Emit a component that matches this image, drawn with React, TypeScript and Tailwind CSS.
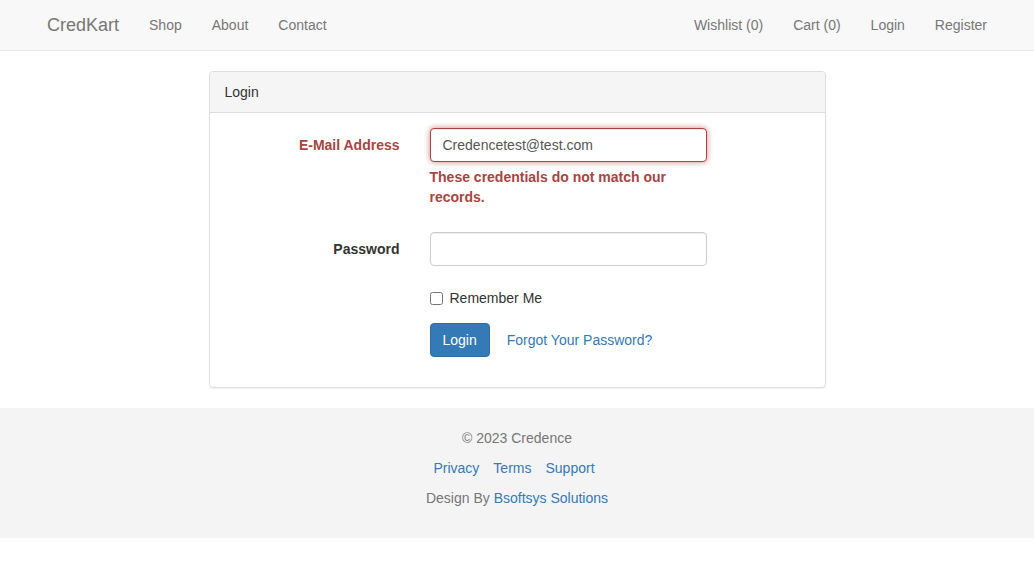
export default function App() {
  return (
    <div className="min-h-screen bg-white font-['Liberation_Sans',Arial,sans-serif] text-[14px] leading-[20px] text-[#333]">
      <nav className="h-[51px] bg-[#f8f8f8] border-b border-[#e7e7e7] mb-[20px]">
        <div className="w-[970px] mx-auto px-[15px] flex justify-between">
          <div className="flex -ml-[15px]">
            <a className="block px-[15px] py-[15px] text-[18px] leading-[20px] text-[#777]">CredKart</a>
            <a className="block px-[15px] py-[15px] text-[#777]">Shop</a>
            <a className="block px-[15px] py-[15px] text-[#777]">About</a>
            <a className="block px-[15px] py-[15px] text-[#777]">Contact</a>
          </div>
          <div className="flex -mr-[15px]">
            <a className="block px-[15px] py-[15px] text-[#777]">Wishlist (0)</a>
            <a className="block px-[15px] py-[15px] text-[#777]">Cart (0)</a>
            <a className="block px-[15px] py-[15px] text-[#777]">Login</a>
            <a className="block px-[15px] py-[15px] text-[#777]">Register</a>
          </div>
        </div>
      </nav>

      <div className="w-[617px] mx-auto mb-[20px] border border-[#ddd] rounded-[4px] bg-white shadow-[0_1px_1px_rgba(0,0,0,0.05)]">
        <div className="bg-[#f5f5f5] border-b border-[#ddd] rounded-t-[3px] px-[15px] py-[10px] text-[#333]">Login</div>
        <div className="py-[15px]">
          <div className="flex mb-[15px]">
            <label className="w-[205px] shrink-0 px-[15px] pt-[7px] text-right font-bold text-[#a94442]">E-Mail Address</label>
            <div className="w-[307px] px-[15px]">
              <input
                readOnly
                value="Credencetest@test.com"
                className="block w-full h-[34px] px-[12px] py-[6px] text-[14px] text-[#555] bg-white border border-[#a94442] rounded-[4px] outline-none shadow-[inset_0_1px_1px_rgba(0,0,0,0.075),0_0_6px_#ce8483]"
              />
              <span className="block mt-[5px] mb-[10px] font-bold text-[#a94442]">These credentials do not match our records.</span>
            </div>
          </div>
          <div className="flex mb-[15px]">
            <label className="w-[205px] shrink-0 px-[15px] pt-[7px] text-right font-bold text-[#333]">Password</label>
            <div className="w-[307px] px-[15px]">
              <input
                readOnly
                type="password"
                className="block w-full h-[34px] px-[12px] py-[6px] text-[14px] text-[#555] bg-white border border-[#ccc] rounded-[4px] outline-none shadow-[inset_0_1px_1px_rgba(0,0,0,0.075)]"
              />
            </div>
          </div>
          <div className="flex mb-[15px]">
            <div className="w-[205px] shrink-0" />
            <div className="w-[307px] px-[15px]">
              <label className="flex items-center pt-[7px] text-[#333]">
                <input type="checkbox" className="w-[13px] h-[13px] m-0 mr-[7px]" />
                <span>Remember Me</span>
              </label>
            </div>
          </div>
          <div className="flex mb-[15px]">
            <div className="w-[205px] shrink-0" />
            <div className="px-[15px] flex items-center">
              <button className="h-[34px] px-[12px] py-[6px] bg-[#337ab7] border border-[#2e6da4] rounded-[4px] text-white text-[14px] leading-[20px]">Login</button>
              <a className="ml-[5px] px-[12px] py-[6px] text-[#337ab7]">Forgot Your Password?</a>
            </div>
          </div>
        </div>
      </div>

      <footer className="bg-[#f4f4f4] pt-[20px] pb-[20px] text-center text-[#777]">
        <p className="mb-[10px]">© 2023 Credence</p>
        <p className="mb-[10px] flex justify-center gap-[14px] pr-[6px] text-[#337ab7]">
          <a>Privacy</a>
          <a>Terms</a>
          <a>Support</a>
        </p>
        <p className="mb-[10px]">
          Design By <a className="text-[#337ab7]">Bsoftsys Solutions</a>
        </p>
      </footer>
    </div>
  );
}
